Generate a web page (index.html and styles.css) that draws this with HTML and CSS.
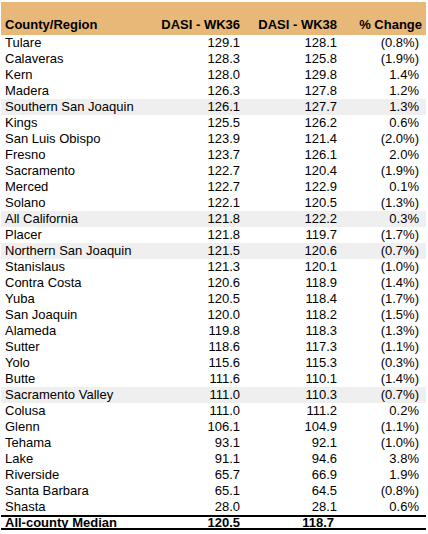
FILE: index.html
```html
<!DOCTYPE html>
<html lang="en">
<head>
    <meta charset="UTF-8">
    <meta name="viewport" content="width=device-width, initial-scale=1.0">
    <title>DASI by County</title>
    <link rel="stylesheet" href="styles.css">
</head>
<body>
<div class="dasi">
    <div class="row head">
        <span class="name">County/Region</span>
        <span>DASI - WK36</span>
        <span>DASI - WK38</span>
        <span class="chg">% Change</span>
    </div>

    <div class="row"><span class="name">Tulare</span><span>129.1</span><span>128.1</span><span class="chg">(0.8%)</span></div>
    <div class="row"><span class="name">Calaveras</span><span>128.3</span><span>125.8</span><span class="chg">(1.9%)</span></div>
    <div class="row"><span class="name">Kern</span><span>128.0</span><span>129.8</span><span class="chg">1.4%</span></div>
    <div class="row"><span class="name">Madera</span><span>126.3</span><span>127.8</span><span class="chg">1.2%</span></div>
    <div class="row region"><span class="name">Southern San Joaquin</span><span>126.1</span><span>127.7</span><span class="chg">1.3%</span></div>
    <div class="row"><span class="name">Kings</span><span>125.5</span><span>126.2</span><span class="chg">0.6%</span></div>
    <div class="row"><span class="name">San Luis Obispo</span><span>123.9</span><span>121.4</span><span class="chg">(2.0%)</span></div>
    <div class="row"><span class="name">Fresno</span><span>123.7</span><span>126.1</span><span class="chg">2.0%</span></div>
    <div class="row"><span class="name">Sacramento</span><span>122.7</span><span>120.4</span><span class="chg">(1.9%)</span></div>
    <div class="row"><span class="name">Merced</span><span>122.7</span><span>122.9</span><span class="chg">0.1%</span></div>
    <div class="row"><span class="name">Solano</span><span>122.1</span><span>120.5</span><span class="chg">(1.3%)</span></div>
    <div class="row region"><span class="name">All California</span><span>121.8</span><span>122.2</span><span class="chg">0.3%</span></div>
    <div class="row"><span class="name">Placer</span><span>121.8</span><span>119.7</span><span class="chg">(1.7%)</span></div>
    <div class="row region"><span class="name">Northern San Joaquin</span><span>121.5</span><span>120.6</span><span class="chg">(0.7%)</span></div>
    <div class="row"><span class="name">Stanislaus</span><span>121.3</span><span>120.1</span><span class="chg">(1.0%)</span></div>
    <div class="row"><span class="name">Contra Costa</span><span>120.6</span><span>118.9</span><span class="chg">(1.4%)</span></div>
    <div class="row"><span class="name">Yuba</span><span>120.5</span><span>118.4</span><span class="chg">(1.7%)</span></div>
    <div class="row"><span class="name">San Joaquin</span><span>120.0</span><span>118.2</span><span class="chg">(1.5%)</span></div>
    <div class="row"><span class="name">Alameda</span><span>119.8</span><span>118.3</span><span class="chg">(1.3%)</span></div>
    <div class="row"><span class="name">Sutter</span><span>118.6</span><span>117.3</span><span class="chg">(1.1%)</span></div>
    <div class="row"><span class="name">Yolo</span><span>115.6</span><span>115.3</span><span class="chg">(0.3%)</span></div>
    <div class="row"><span class="name">Butte</span><span>111.6</span><span>110.1</span><span class="chg">(1.4%)</span></div>
    <div class="row region"><span class="name">Sacramento Valley</span><span>111.0</span><span>110.3</span><span class="chg">(0.7%)</span></div>
    <div class="row"><span class="name">Colusa</span><span>111.0</span><span>111.2</span><span class="chg">0.2%</span></div>
    <div class="row"><span class="name">Glenn</span><span>106.1</span><span>104.9</span><span class="chg">(1.1%)</span></div>
    <div class="row"><span class="name">Tehama</span><span>93.1</span><span>92.1</span><span class="chg">(1.0%)</span></div>
    <div class="row"><span class="name">Lake</span><span>91.1</span><span>94.6</span><span class="chg">3.8%</span></div>
    <div class="row"><span class="name">Riverside</span><span>65.7</span><span>66.9</span><span class="chg">1.9%</span></div>
    <div class="row"><span class="name">Santa Barbara</span><span>65.1</span><span>64.5</span><span class="chg">(0.8%)</span></div>
    <div class="row"><span class="name">Shasta</span><span>28.0</span><span>28.1</span><span class="chg">0.6%</span></div>

    <div class="row total">
        <span class="name">All-county Median</span>
        <span>120.5</span>
        <span class="wk38">118.7</span>
        <span class="chg"></span>
    </div>
</div>
</body>
</html>
```

FILE: styles.css
```css
body {
    margin: 0;
    background-color: #ffffff;
    font-family: "Liberation Sans", Arial, Helvetica, sans-serif;
    color: #000000;
}

.dasi {
    width: 425px;
    margin: 2px 0 0 1px;
    font-size: 13px;
}

.row {
    display: grid;
    grid-template-columns: 150px 90px 97px 88px;
    height: 16px;
    line-height: 16px;
    white-space: nowrap;
}

.row span {
    text-align: right;
    padding-right: 1px;
}

.row .name {
    text-align: left;
    padding-left: 4px;
}

.row .chg {
    padding-right: 7px;
}

.head {
    height: 33px;
    line-height: 15px;
    align-items: end;
    padding-bottom: 3px;
    box-sizing: border-box;
    background-color: #e8b878;
    font-weight: bold;
}

.head .chg {
    padding-right: 4px;
}

.region {
    background-color: #efefef;
}

.total {
    height: 15px;
    line-height: 11px;
    border-top: 2px solid #000000;
    border-bottom: 2px solid #000000;
    box-sizing: border-box;
    font-weight: bold;
}

.total .wk38 {
    padding-right: 4px;
}
```
